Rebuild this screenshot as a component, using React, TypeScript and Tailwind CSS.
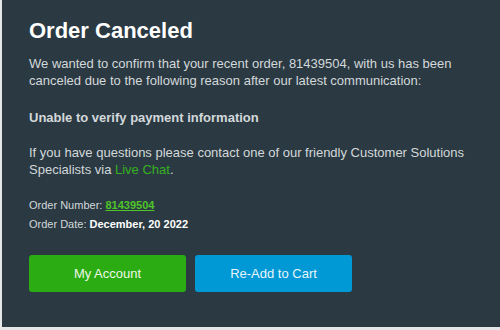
export default function App() {
  return (
    <div className="h-[330px] w-[500px] bg-[#e4e6e7] pl-[2px] pb-[3px] font-['Liberation_Sans',Arial,sans-serif]">
      <div className="h-full bg-[#2b3a42] pl-[27px] pr-[29px] pt-[18px] text-[13px] leading-[17px] text-[#d3d8db]">
        {/* Heading */}
        <h1 className="text-[22px] font-bold leading-[26px] text-white">Order Canceled</h1>

        <p className="mt-[11px]">
          We wanted to confirm that your recent order, 81439504, with us has been canceled due to the
          following reason after our latest communication:
        </p>

        <p className="mt-[20px] font-bold">Unable to verify payment information</p>

        <p className="mt-[18px]">
          If you have questions please contact one of our friendly Customer Solutions Specialists via{' '}
          <a href="#" className="text-[#35b11f]">
            Live Chat
          </a>
          .
        </p>

        {/* Order details */}
        <div className="mt-[18px] text-[11px] leading-[19px]">
          <div>
            Order Number:{' '}
            <a href="#" className="font-bold text-[#4fc52a] underline">
              81439504
            </a>
          </div>
          <div>
            Order Date: <span className="font-bold text-white">December, 20 2022</span>
          </div>
        </div>

        {/* Actions */}
        <div className="mt-[21px] flex gap-[9px]">
          <button className="flex h-[37px] w-[157px] items-center justify-center rounded-[3px] bg-[#2bac12] text-[13px] text-[#eef7e8]">
            My Account
          </button>
          <button className="flex h-[37px] w-[157px] items-center justify-center rounded-[3px] bg-[#0099d5] text-[13px] text-[#eaf5fb]">
            Re-Add to Cart
          </button>
        </div>
      </div>
    </div>
  );
}
